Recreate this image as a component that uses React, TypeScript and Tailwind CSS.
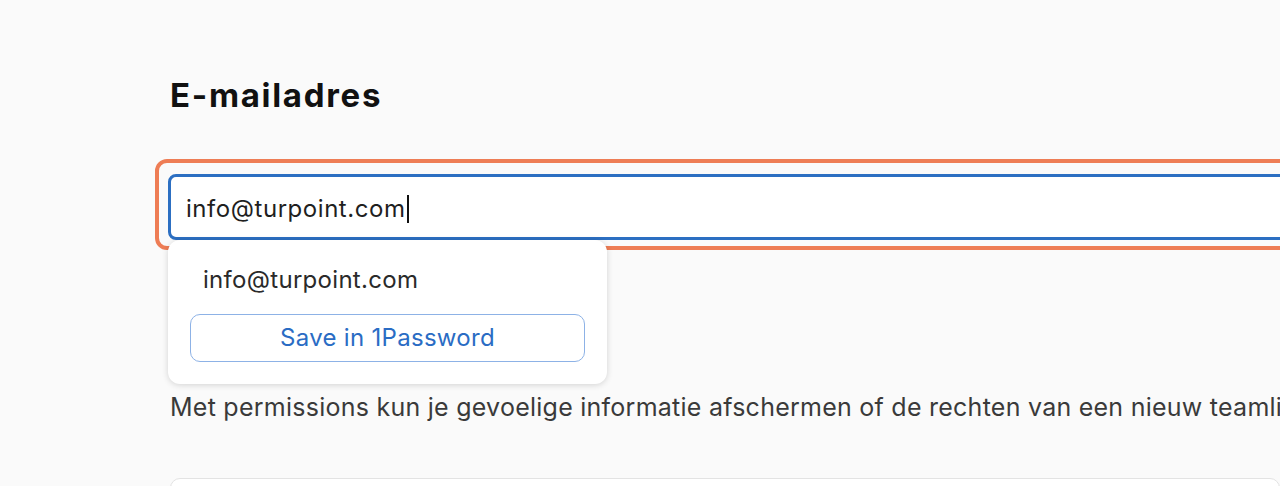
export default function App() {
  return (
    <div className="min-h-[486px] w-[1280px] overflow-hidden bg-[#fafafa] font-['Inter',sans-serif] text-[#1b1b1b]">
      <div className="pl-[170px] pt-[75px]">
        <h1 className="text-[33px] font-bold leading-[40px] tracking-[1.7px] text-[#111]">E-mailadres</h1>

        <div className="relative mt-[44px] -ml-[15px]">
          <div className="w-[1200px] rounded-[12px] border-[4px] border-[#ee7d55] pt-[11px] pb-[6px] pl-[9px]">
            <div className="flex h-[66px] items-center rounded-[8px] border-[3px] border-[#2c6fc2] bg-white pl-[15px] pt-[3px]">
              <span className="text-[24px] tracking-[0.55px] text-[#1f1f1f]">info@turpoint.com</span>
              <span className="ml-[1px] h-[28px] w-[2px] bg-[#111]" />
            </div>
          </div>

          <div className="absolute left-[13px] top-[81px] z-10 w-[439px] rounded-[12px] bg-white px-[22px] pt-[26px] pb-[22px] shadow-[0_1px_6px_rgba(0,0,0,0.16)]">
            <div className="pl-[13px] text-[24px] leading-[28px] tracking-[0.3px] text-[#2a2a2a]">info@turpoint.com</div>
            <button className="mt-[20px] flex h-[48px] w-full items-center justify-center rounded-[10px] border border-[#8db2e6] bg-white text-[24px] tracking-[0.3px] text-[#2a6cc4]">
              Save in 1Password
            </button>
          </div>
        </div>

        <p className="mt-[143px] whitespace-nowrap text-[25px] leading-[28px] tracking-[0.25px] text-[#3a3a3a]">
          Met permissions kun je gevoelige informatie afschermen of de rechten van een nieuw teamlid aanpassen.
        </p>

        <div className="mt-[57px] h-[40px] rounded-t-[10px] border border-[#e3e3e3] bg-white" />
      </div>
    </div>
  );
}
